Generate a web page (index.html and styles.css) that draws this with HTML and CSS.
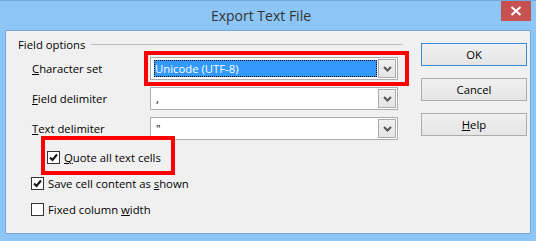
FILE: index.html
```html
<!DOCTYPE html>
<html>
<head>
<meta charset="utf-8">
<link rel="stylesheet" href="styles.css">
</head>
<body>
<div class="window">
  <div class="titlebar">
    <div class="title">Export Text File</div>
    <div class="close"><svg width="12" height="10" viewBox="0 0 12 10"><path d="M1.5 1 L10.5 9 M10.5 1 L1.5 9" stroke="#fff" stroke-width="2.2" fill="none"/></svg></div>
  </div>
  <div class="client">
    <div class="main">
      <div class="group-head"><span>Field options</span><div class="rule"></div></div>
      <div class="rows">
        <div class="row">
          <div class="label"><u>C</u>haracter set</div>
          <div class="combo focused">
            <div class="value"><span class="sel">Unicode (UTF-8)</span></div>
            <div class="drop"><svg width="9" height="6" viewBox="0 0 9 6"><path d="M1 1 L4.5 4.5 L8 1" stroke="#555" stroke-width="2" fill="none"/></svg></div>
          </div>
        </div>
        <div class="row">
          <div class="label"><u>F</u>ield delimiter</div>
          <div class="combo">
            <div class="value"><span class="plain">,</span></div>
            <div class="drop"><svg width="9" height="6" viewBox="0 0 9 6"><path d="M1 1 L4.5 4.5 L8 1" stroke="#555" stroke-width="2" fill="none"/></svg></div>
          </div>
        </div>
        <div class="row">
          <div class="label"><u>T</u>ext delimiter</div>
          <div class="combo">
            <div class="value"><span class="plain">"</span></div>
            <div class="drop"><svg width="9" height="6" viewBox="0 0 9 6"><path d="M1 1 L4.5 4.5 L8 1" stroke="#555" stroke-width="2" fill="none"/></svg></div>
          </div>
        </div>
      </div>
      <div class="checks">
        <div class="check indent">
          <span class="box"><svg width="11" height="11" viewBox="0 0 11 11"><path d="M2 5.5 L4.5 8 L9 2.5" stroke="#111" stroke-width="2" fill="none"/></svg></span>
          <span><u>Q</u>uote all text cells</span>
        </div>
        <div class="check">
          <span class="box"><svg width="11" height="11" viewBox="0 0 11 11"><path d="M2 5.5 L4.5 8 L9 2.5" stroke="#111" stroke-width="2" fill="none"/></svg></span>
          <span>Save cell content as <u>s</u>hown</span>
        </div>
        <div class="check">
          <span class="box"></span>
          <span>Fixed column <u>w</u>idth</span>
        </div>
      </div>
    </div>
    <div class="buttons">
      <div class="btn default">OK</div>
      <div class="btn">Cancel</div>
      <div class="btn"><u>H</u>elp</div>
    </div>
  </div>
  <div class="annot a1"></div>
  <div class="annot a2"></div>
</div>
</body>
</html>
```
FILE: styles.css
```css
* { box-sizing: border-box; }
html, body { margin: 0; padding: 0; background: #8cc6f7; }
body {
  font-family: "Open Sans", "Noto Sans", sans-serif;
  font-size: 11.3px;
  color: #000;
}
.window {
  position: relative;
  width: 536px;
  height: 241px;
  background: #8cc6f7;
  border-top: 1px solid #70a8dc;
  overflow: hidden;
}
.titlebar {
  height: 29px;
  display: flex;
  align-items: flex-start;
}
.title {
  flex: 1;
  text-align: center;
  padding-left: 21px;
  font-size: 14px;
  line-height: 29px;
  color: #333;
}
.close {
  width: 30px;
  height: 20px;
  margin-right: 5px;
  background: #c75050;
  display: flex;
  align-items: center;
  justify-content: center;
}
.client {
  margin: 0 5px;
  height: 204px;
  border: 1px solid #76a6d6;
  background: #f0f0f0;
  display: grid;
  grid-template-columns: 399px 1fr;
}
.main { padding-top: 6px; }
.group-head {
  display: flex;
  align-items: center;
  height: 16px;
  padding-left: 12px;
  padding-right: 2px;
}
.group-head span { line-height: 16px; }
.rule {
  flex: 1;
  height: 1px;
  background: #bcbcbc;
  margin-left: 6px;
  margin-top: -1px;
}
.rows {
  margin-top: 4px;
  padding-left: 26px;
  display: flex;
  flex-direction: column;
  gap: 7px;
}
.row {
  display: flex;
  align-items: center;
  height: 23px;
}
.label { width: 118px; }
.combo {
  width: 248px;
  height: 23px;
  border: 1px solid #abadb3;
  background: #fff;
  display: flex;
  padding: 1px;
}
.value {
  flex: 1;
  display: flex;
  padding: 1px 1px 1px 2px;
}
.sel {
  flex: 1;
  background: #3399ff;
  color: #fff;
  outline: 1px dotted #000;
  outline-offset: -1px;
  line-height: 17px;
  padding-left: 1px;
}
.plain { padding-left: 2px; line-height: 17px; }
.drop {
  width: 18px;
  border: 1px solid #acacac;
  background: linear-gradient(#f0f0f0, #e5e5e5);
  display: flex;
  align-items: center;
  justify-content: center;
}
.checks {
  margin-top: 10px;
  padding-left: 25px;
  display: flex;
  flex-direction: column;
  gap: 11px;
}
.check {
  display: flex;
  align-items: center;
  height: 15px;
  gap: 4px;
}
.check.indent { padding-left: 16px; }
.box {
  width: 13px;
  height: 13px;
  border: 1px solid #333;
  background: #fff;
  display: flex;
  align-items: center;
  justify-content: center;
}
.buttons {
  padding-top: 12px;
  padding-left: 16px;
  display: flex;
  flex-direction: column;
  gap: 12px;
}
.btn {
  width: 106px;
  height: 23px;
  border: 1px solid #acacac;
  background: linear-gradient(#f0f0f0, #e5e5e5);
  display: flex;
  align-items: center;
  justify-content: center;
  color: #000;
}
.btn.default { border-color: #3c8cdc; }
.annot {
  position: absolute;
  border: 4px solid #ff0000;
}
.a1 { left: 144px; top: 50px; width: 265px; height: 35px; }
.a2 { left: 41px; top: 135px; width: 134px; height: 39px; }
```
